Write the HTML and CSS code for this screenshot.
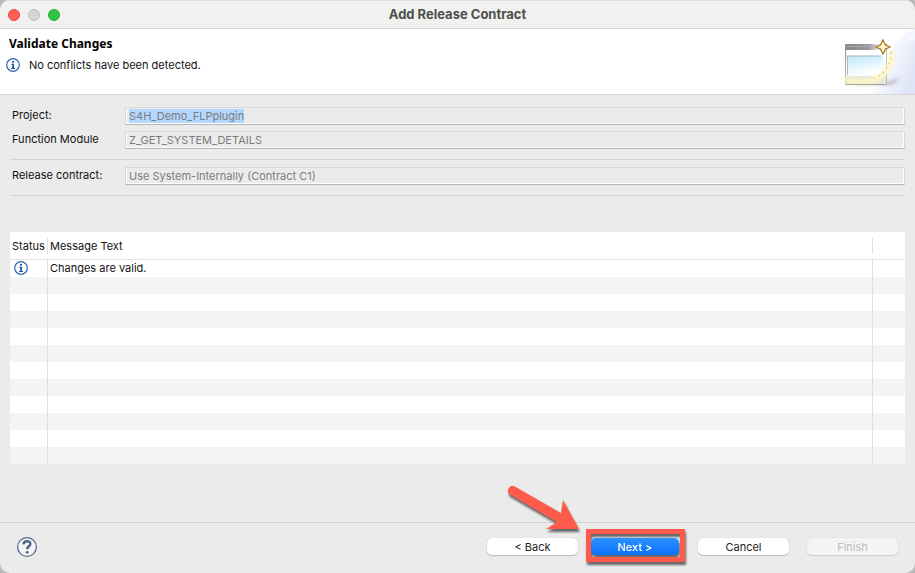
FILE: index.html
```html
<!DOCTYPE html>
<html lang="en">
<head>
<meta charset="utf-8">
<title>Add Release Contract</title>
<link rel="stylesheet" href="styles.css">
</head>
<body>
<svg class="defs" aria-hidden="true">
  <symbol id="info" viewBox="0 0 14 14">
    <circle cx="7" cy="7" r="6.3" fill="#fff" stroke="#2c66ab" stroke-width="1.2"/>
    <circle cx="7" cy="3.8" r="1.1" fill="#175aa8"/>
    <path d="M5.2 5.7H8V10H9.1V11H5V10H6.2V6.7H5.2Z" fill="#175aa8"/>
  </symbol>
</svg>
<main class="window">
  <header class="titlebar">
    <div class="lights">
      <button class="light close" aria-label="Close"></button>
      <button class="light minimize" aria-label="Minimize" disabled></button>
      <button class="light zoom" aria-label="Zoom"></button>
    </div>
    <h1>Add Release Contract</h1>
  </header>

  <section class="banner">
    <div class="banner-text">
      <h2>Validate Changes</h2>
      <p><svg class="info" aria-hidden="true"><use href="#info"/></svg>No conflicts have been detected.</p>
    </div>
    <svg class="banner-art" viewBox="0 0 80 65" aria-hidden="true">
      <defs>
        <linearGradient id="sweep" gradientUnits="userSpaceOnUse" x1="42" y1="30" x2="80" y2="45">
          <stop offset="0" stop-color="#fff"/>
          <stop offset="0.5" stop-color="#eef2fb"/>
          <stop offset="1" stop-color="#dee5f6"/>
        </linearGradient>
        <linearGradient id="bar" x1="0" x2="1">
          <stop offset="0" stop-color="#858585"/>
          <stop offset="0.55" stop-color="#989898"/>
          <stop offset="0.8" stop-color="#e6e6e6"/>
          <stop offset="1" stop-color="#999"/>
        </linearGradient>
        <linearGradient id="pane" x1="0" x2="0.4" y1="0" y2="1">
          <stop offset="0" stop-color="#bfe7fb"/>
          <stop offset="0.5" stop-color="#def3fd"/>
          <stop offset="1" stop-color="#fff"/>
        </linearGradient>
        <linearGradient id="side" x1="0" x2="0" y1="0" y2="1">
          <stop offset="0" stop-color="#8d8d8d"/>
          <stop offset="1" stop-color="#c4c2b4"/>
        </linearGradient>
        <filter id="soft" x="-30%" y="-30%" width="160%" height="160%"><feGaussianBlur stdDeviation="1.5"/></filter>
      </defs>
      <path d="M80 0V65H30C46 58 52 48 55 36C57 22 62 8 80 0Z" fill="url(#sweep)"/>
      <path d="M80 0V11C70 14 63 18 56 25C59 12 68 4 80 0Z" fill="#f3f6fd"/>
      <path d="M53 52L66 48L58 56L14 57Z" fill="#948b9a" opacity=".4" filter="url(#soft)"/>
      <rect x="10.500" y="15.500" width="41" height="40" fill="#fbfbf8" stroke="#b9b9b2"/>
      <rect x="11" y="47" width="40" height="8" fill="#ebe7dc"/>
      <rect x="10" y="15" width="42" height="6" fill="url(#bar)"/>
      <path d="M10 17.500H40" stroke="#aaa"/>
      <rect x="10" y="15" width="1" height="41" fill="url(#side)"/>
      <rect x="11" y="21" width="40" height="6" fill="#fff"/>
      <rect x="12" y="27" width="36" height="19" fill="url(#pane)"/>
      <path d="M11 27H46" stroke="#a3b4b8"/>
      <path d="M12.500 27V46" stroke="#a8b9c0"/>
      <path d="M10 50Q26 57 43 49Q57 41 57 22" fill="none" stroke="#fbf5c8" stroke-width="6" opacity=".9" filter="url(#soft)"/>
      <path d="M37 51Q58 43 57 24" fill="none" stroke="#fffad9" stroke-width="4" opacity=".7"/>
      <path d="M38 50L46 46L52 39L56 30V22" fill="none" stroke="#f3df9d" stroke-width="2" stroke-dasharray="2.500 3"/>
      <path d="M11 55.500H51" stroke="#a5a393"/>
      <path d="M48 11L50.500 16L55 18L50.500 20L48 25L45.500 20L41 18L45.500 16Z" fill="#fff5cf" stroke="#a8792b" stroke-width="1.300"/>
    </svg>
  </section>

  <form class="details">
    <div class="field"><label for="project">Project:</label><input id="project" value="S4H_Demo_FLPplugin" readonly></div>
    <div class="field"><label for="module">Function Module</label><input id="module" value="Z_GET_SYSTEM_DETAILS" readonly></div>
    <hr>
    <div class="field"><label for="contract">Release contract:</label><input id="contract" value="Use System-Internally (Contract C1)" readonly></div>
    <hr>
  </form>

  <table class="messages">
    <colgroup><col class="col-status"><col><col class="col-end"></colgroup>
    <thead><tr><th>Status</th><th>Message Text</th><th></th></tr></thead>
    <tbody>
      <tr><td><svg class="info" role="img" aria-label="Information"><use href="#info"/></svg></td><td>Changes are valid.</td><td></td></tr>
      <tr><td></td><td></td><td></td></tr>
      <tr><td></td><td></td><td></td></tr>
      <tr><td></td><td></td><td></td></tr>
      <tr><td></td><td></td><td></td></tr>
      <tr><td></td><td></td><td></td></tr>
      <tr><td></td><td></td><td></td></tr>
      <tr><td></td><td></td><td></td></tr>
      <tr><td></td><td></td><td></td></tr>
      <tr><td></td><td></td><td></td></tr>
      <tr><td></td><td></td><td></td></tr>
      <tr><td></td><td></td><td></td></tr>
    </tbody>
  </table>

  <footer class="actions">
    <button class="help" aria-label="Help">
      <svg viewBox="0 0 22 22" aria-hidden="true">
        <circle cx="11" cy="11" r="9.400" fill="#f4f4f5" stroke="#5b6c8f" stroke-width="1.300"/>
        <path d="M7.600 8.400C7.500 4.200 14.300 4.100 14.300 7.900C14.300 10.400 11.200 10.300 11.200 13.200" fill="none" stroke="#526487" stroke-width="2.500"/>
        <circle cx="11.200" cy="16.300" r="1.400" fill="#526487"/>
      </svg>
    </button>
    <div class="buttons">
      <button class="push">&lt; Back</button>
      <div class="callout">
        <button class="push primary">Next &gt;</button>
        <svg class="arrow" viewBox="0 0 80 56" aria-hidden="true">
          <path d="M7 2L54 29L56 16L72 45L39 45L50 38L2 10A5 5 0 0 1 7 2Z" fill="#ff5b4d"/>
        </svg>
      </div>
      <button class="push">Cancel</button>
      <button class="push" disabled>Finish</button>
    </div>
  </footer>
</main>
<script src="main.js"></script>
</body>
</html>
```
FILE: styles.css
```css
* { box-sizing: border-box; }

html { background: #b9babc; }

body {
  margin: 0;
  font: 11px/14px Inter, "Liberation Sans", sans-serif;
  color: #111;
}

button, input { font: inherit; }

.defs { position: absolute; width: 0; height: 0; }

.window {
  display: flex;
  flex-direction: column;
  min-height: 100vh;
  overflow: hidden;
  background: #ebebeb;
  border-radius: 10px;
}

.titlebar {
  display: grid;
  grid-template-columns: 1fr auto 1fr;
  align-items: center;
  height: 29px;
  padding: 0 8px;
  background: #f1f1f0;
  border-top: 1px solid #dededd;
  border-bottom: 1px solid #d6d6d6;
}

.titlebar h1 { margin: 0; padding-bottom: 2px; font-size: 13px; line-height: 16px; font-weight: 700; color: #4f4f4f; }

.lights { display: flex; gap: 8px; }

.light { width: 12px; height: 12px; padding: 0; border: 1px solid; border-radius: 50%; }
.close { background: #ff5f57; border-color: #e5483f; }
.minimize { background: #d5d5d4; border-color: #bcbcbb; }
.zoom { background: #30c641; border-color: #23ae32; }

.banner {
  display: flex;
  justify-content: space-between;
  height: 66px;
  background: #fff;
  border-bottom: 1px solid #d6d6d6;
}

.banner h2 {
  margin: 0;
  padding: 7px 0 0 9px;
  font: bold 12px/16px "Noto Sans", "Open Sans", sans-serif;
  color: #000;
}

.banner p { display: flex; align-items: center; gap: 9px; margin: 6px 0 0 6px; }
.info { display: block; width: 14px; height: 14px; }
.banner-art { width: 80px; height: 65px; }

.details { padding: 12px 10px 0; }

.field { display: flex; align-items: center; margin-bottom: 6px; }
.field label { flex: none; width: 115px; padding: 0 0 2px 2px; }

.field input {
  flex: 1;
  min-width: 0;
  height: 18px;
  padding: 0 3px 1px;
  border: 1px solid #d8d8d8;
  border-bottom-color: #b5b5b5;
  border-radius: 0;
  outline: 0;
  background: #ebebeb;
  box-shadow: inset 1px 0 #fff, inset -1px -1px #fff;
  color: #7c7c7c;
}

.field input::selection { background: #b3d7ff; color: #7c7c7c; }

.details hr { height: 1px; margin: 10px 0 7px; border: 0; background: #d5d5d5; }

.messages {
  width: calc(100% - 20px);
  margin: 29px 10px 0;
  table-layout: fixed;
  border-spacing: 0;
  background: #fff;
}

.col-status { width: 38px; }
.col-end { width: 32px; }

.messages th {
  height: 28px;
  padding: 0 2px;
  border-bottom: 1px solid #e3e3e3;
  background: linear-gradient(#e0e0e0, #e0e0e0) right 6px / 1px 16px no-repeat;
  font-weight: 400;
  text-align: left;
}

.messages td { height: 17px; padding: 0 2px 2px; border-right: 1px solid #dfdfdf; }
.messages td .info { margin-left: 2px; }
.messages th:last-child { background: none; }
.messages td:last-child { border-right: 0; }
.messages tbody tr:nth-child(even) { background: #f3f5f5; }

.actions {
  display: flex;
  align-items: center;
  justify-content: space-between;
  height: 51px;
  margin-top: auto;
  padding: 0 17px 2px 16px;
  border-top: 1px solid #d4d4d4;
}

.help { width: 22px; height: 22px; padding: 0; border: 0; background: none; }
.help svg { display: block; }

.buttons { display: flex; align-items: center; gap: 18px; margin-bottom: 1px; }

.push {
  width: 91px;
  height: 17px;
  padding: 1px 0 0;
  border: 0;
  border-radius: 5px;
  background: #fff;
  box-shadow: 0 0 1px #aaa, 0 1px 1px #bbb;
  color: #222;
  line-height: 16px;
}

.push:disabled { background: #f4f4f4; box-shadow: 0 0 1px #bbb, 0 1px 1px #d0d0d0; color: #bdbdbd; }

.callout {
  position: relative;
  margin: 0 -5px 2px -10px;
  padding: 4px 1px 2px 0;
  border: 5px solid #ff5b4d;
  filter: drop-shadow(1px 3px 1px #666);
}

.callout .push { display: block; width: 88px; background: linear-gradient(#2d91ff, #0b72ff); box-shadow: none; color: #fff; font-weight: 500; }

.arrow { position: absolute; right: 93px; bottom: 17px; width: 80px; height: 56px; }
```
FILE: main.js
```js
const project = document.getElementById("project");
project.focus();
project.select();
```
